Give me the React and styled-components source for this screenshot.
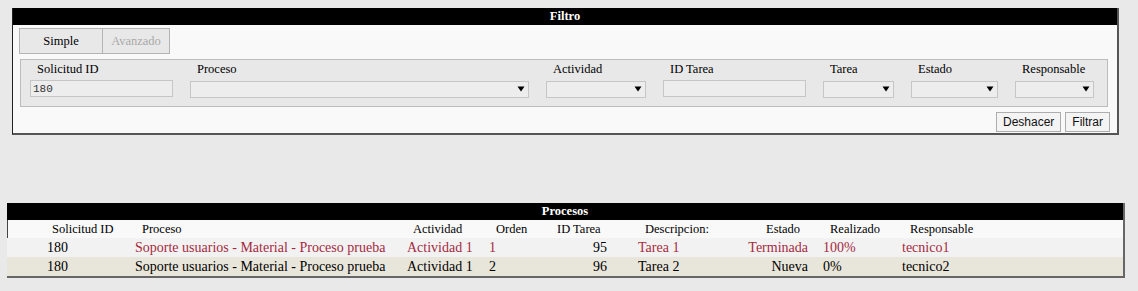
import React from "react";
import styled, { createGlobalStyle } from "styled-components";

const Global = createGlobalStyle`
  html, body { margin: 0; padding: 0; }
  body {
    background: #e9e9e9;
    font-family: "Liberation Serif", "Times New Roman", serif;
    color: #000;
  }
  * { box-sizing: border-box; }
`;

const Page = styled.div`
  padding-top: 8px;
  width: 1138px;
`;

const FilterPanel = styled.section`
  margin: 0 19px 0 12px;
  background: #f9f9f9;
  border-left: 1px solid #222;
  border-right: 2px solid #555;
  border-bottom: 2px solid #555;
`;

const PanelHeader = styled.div`
  height: 17px;
  line-height: 17px;
  background: #000;
  color: #fff;
  font-weight: bold;
  font-size: 12.5px;
  text-align: center;
`;

const PanelBody = styled.div`
  padding: 3px 7px 1px 6px;
`;

const Tabs = styled.div`
  display: flex;
`;

const Tab = styled.button`
  height: 26px;
  width: ${(p) => p.$w}px;
  background: #e8e8e8;
  border: 1px solid #b4b4b4;
  border-left-width: ${(p) => (p.$first ? 1 : 0)}px;
  font-family: "Liberation Serif", "Times New Roman", serif;
  font-size: 12.5px;
  color: ${(p) => (p.$active ? "#000" : "#a8a8a8")};
  padding: 0;
  margin: 0;
  text-align: center;
`;

const FieldsBox = styled.div`
  margin: 5px 2px 0 1px;
  height: 48px;
  background: #e8e8e8;
  border: 1px solid #bcbcbc;
  padding: 0 0 9px 9px;
  display: flex;
  gap: 17px;
`;

const Field = styled.div`
  display: flex;
  flex-direction: column;
  width: ${(p) => p.$w}px;
`;

const Label = styled.div`
  height: 18px;
  line-height: 18px;
  padding-left: 7px;
  font-size: 12.5px;
  white-space: nowrap;
  margin-bottom: 2px;
`;

const TextInput = styled.input`
  height: 17px;
  width: 100%;
  margin: 0;
  padding: 0 2px;
  background: #ededed;
  border: 1px solid #c6c6c6;
  font-family: "Liberation Mono", "Courier New", monospace;
  font-size: 11px;
  color: #333;
  outline: none;
`;

const SelectWrap = styled.div`
  position: relative;
  height: 17px;
  width: 100%;
`;

const SelectBox = styled.select`
  appearance: none;
  -webkit-appearance: none;
  height: 17px;
  width: 100%;
  margin: 0;
  padding: 0 2px;
  background: #ededed;
  border: 1px solid #c6c6c6;
  border-radius: 0;
  outline: none;
`;

const Arrow = styled.svg`
  position: absolute;
  right: 4px;
  top: 6px;
  pointer-events: none;
`;

const ButtonRow = styled.div`
  display: flex;
  justify-content: flex-end;
  gap: 4px;
  margin-top: 5px;
`;

const Button = styled.button`
  height: 20px;
  padding: 0 6px;
  margin: 0;
  background: #f4f4f4;
  border: 1px solid #adadad;
  border-radius: 0;
  font-family: "Liberation Sans", Arial, sans-serif;
  font-size: 12px;
  color: #111;
`;

const ProcPanel = styled.section`
  margin: 68px 13px 0 7px;
  border-right: 2px solid #666;
  border-bottom: 2px solid #666;
`;

const COLS = "38px 88px 272px 82px 63px 86px 109px 76px 79px 1fr";

const Row = styled.div`
  display: grid;
  grid-template-columns: ${COLS};
  height: ${(p) => p.$h}px;
  align-items: center;
  background: ${(p) => p.$bg};
  font-size: ${(p) => p.$fs}px;
  box-shadow: ${(p) => (p.$head ? "inset 1px 0 0 #444" : "none")};
`;

const Cell = styled.div`
  padding-left: ${(p) => p.$pl || 0}px;
  padding-right: ${(p) => p.$pr || 0}px;
  text-align: ${(p) => p.$align || "left"};
  color: ${(p) => p.$color || "#000"};
  white-space: nowrap;
  overflow: hidden;
`;

const headers = [
  { t: "", pl: 0 },
  { t: "Solicitud ID", pl: 7 },
  { t: "Proceso", pl: 9 },
  { t: "Actividad", pl: 8 },
  { t: "Orden", pl: 9 },
  { t: "ID Tarea", pl: 7 },
  { t: "Descripcion:", pl: 9 },
  { t: "Estado", pl: 21 },
  { t: "Realizado", pl: 9 },
  { t: "Responsable", pl: 10 },
];

const dataLayout = [
  { pl: 0 },
  { pl: 2 },
  { pl: 2 },
  { pl: 2 },
  { pl: 2 },
  { align: "right", pr: 29 },
  { pl: 2 },
  { align: "right", pr: 13 },
  { pl: 2 },
  { pl: 2 },
];

const RED = "#a52a3e";

const rows = [
  {
    bg: "#f2f2f2",
    h: 19,
    cells: [
      ["", null],
      ["180", null],
      ["Soporte usuarios - Material - Proceso prueba", RED],
      ["Actividad 1", RED],
      ["1", RED],
      ["95", null],
      ["Tarea 1", RED],
      ["Terminada", RED],
      ["100%", RED],
      ["tecnico1", RED],
    ],
  },
  {
    bg: "#e8e6da",
    h: 19,
    cells: [
      ["", null],
      ["180", null],
      ["Soporte usuarios - Material - Proceso prueba", null],
      ["Actividad 1", null],
      ["2", null],
      ["96", null],
      ["Tarea 2", null],
      ["Nueva", null],
      ["0%", null],
      ["tecnico2", null],
    ],
  },
];

const fields = [
  { label: "Solicitud ID", w: 143, type: "input", value: "180" },
  { label: "Proceso", w: 339, type: "select" },
  { label: "Actividad", w: 100, type: "select" },
  { label: "ID Tarea", w: 143, type: "input", value: "" },
  { label: "Tarea", w: 71, type: "select" },
  { label: "Estado", w: 87, type: "select" },
  { label: "Responsable", w: 79, type: "select" },
];

function Select() {
  return (
    <SelectWrap>
      <SelectBox defaultValue="">
        <option value=""></option>
      </SelectBox>
      <Arrow width="8" height="6" viewBox="0 0 8 6">
        <path d="M0.5 0.5 H7.5 L4 5.5 Z" fill="#000" />
      </Arrow>
    </SelectWrap>
  );
}

export default function App() {
  return (
    <>
      <Global />
      <Page>
        <FilterPanel>
          <PanelHeader>Filtro</PanelHeader>
          <PanelBody>
            <Tabs>
              <Tab $w={84} $first $active>
                Simple
              </Tab>
              <Tab $w={67}>Avanzado</Tab>
            </Tabs>
            <FieldsBox>
              {fields.map((f) => (
                <Field key={f.label} $w={f.w}>
                  <Label>{f.label}</Label>
                  {f.type === "input" ? (
                    <TextInput defaultValue={f.value} />
                  ) : (
                    <Select />
                  )}
                </Field>
              ))}
            </FieldsBox>
            <ButtonRow>
              <Button>Deshacer</Button>
              <Button>Filtrar</Button>
            </ButtonRow>
          </PanelBody>
        </FilterPanel>

        <ProcPanel>
          <PanelHeader>Procesos</PanelHeader>
          <Row $bg="#f9f9f9" $h={18} $fs={12.5} $head>
            {headers.map((h, i) => (
              <Cell key={i} $pl={h.pl}>
                {h.t}
              </Cell>
            ))}
          </Row>
          {rows.map((r, ri) => (
            <Row key={ri} $bg={r.bg} $h={r.h} $fs={14}>
              {r.cells.map(([t, c], i) => (
                <Cell
                  key={i}
                  $pl={dataLayout[i].pl}
                  $pr={dataLayout[i].pr}
                  $align={dataLayout[i].align}
                  $color={c || "#000"}
                >
                  {t}
                </Cell>
              ))}
            </Row>
          ))}
        </ProcPanel>
      </Page>
    </>
  );
}
